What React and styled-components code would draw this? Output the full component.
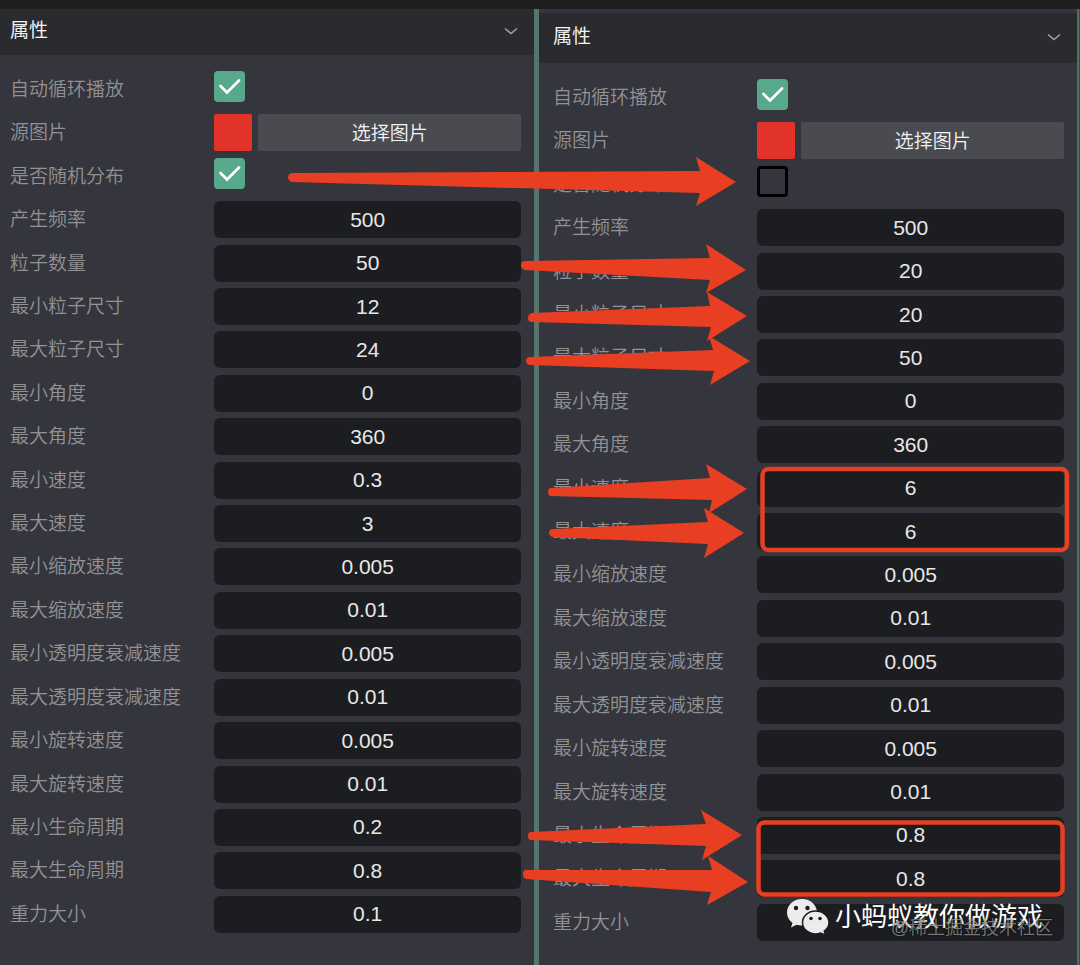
import React from "react";
import styled, { createGlobalStyle } from "styled-components";

const GlobalStyle = createGlobalStyle`
  * {
    box-sizing: border-box;
  }

  body {
    margin: 0;
    background: #35353d;
    font-family: "Liberation Sans", "Noto Sans CJK SC", sans-serif;
  }
`;

const Page = styled.div`
  position: relative;
  display: flex;
  flex-direction: column;
  min-height: 100vh;
  background: #35353d;
`;

const TopBar = styled.div`
  flex: none;
  height: 9px;
  background: #1f1f1f;
`;

const Columns = styled.div`
  flex: 1;
  display: grid;
  grid-template-columns: 534fr 5px 538fr 3px;
`;

const Divider = styled.div`
  border: solid #4f776c;
  border-width: 0 2px;
  background: #68706f;
`;

const EdgeLine = styled.div`
  border-left: 2px solid #4c7062;
  background: #3d4a47;
`;

const Panel = styled.section`
  display: flex;
  flex-direction: column;
  padding-top: ${props => (props.$offset ? "4px" : "0")};
  padding-bottom: ${props => (props.$offset ? "24px" : "32px")};
`;

const PanelHeader = styled.header`
  display: flex;
  align-items: center;
  justify-content: space-between;
  height: ${props => (props.$offset ? "50px" : "46px")};
  padding: 0 13px 0 ${props => (props.$offset ? "14px" : "10px")};
  background: #2a2b2f;
`;

const Title = styled.h2`
  margin: 0;
  color: #f2f2f2;
  font-size: 19px;
  font-weight: 400;
  line-height: 26px;
  padding-bottom: 2px;
`;

const Toggle = styled.button`
  display: flex;
  padding: 0 0 2px;
  border: 0;
  background: none;
  color: #a3a3a6;
  cursor: pointer;
`;

const Fields = styled.div`
  flex: 1;
  display: flex;
  flex-direction: column;
  justify-content: space-between;
  gap: 6px;
  padding: 16px 13px 0 ${props => (props.$offset ? "14px" : "10px")};
`;

const Row = styled.div`
  display: grid;
  grid-template-columns: 2fr 3fr;
  height: 37px;
`;

const Label = styled.label`
  color: #929295;
  font-size: 19px;
  font-weight: 350;
  line-height: 37px;
  white-space: nowrap;
`;

const NumberInput = styled.input`
  width: 100%;
  height: 37px;
  padding: 0;
  border: 0;
  border-radius: 6px;
  background: #1c1d20;
  color: #e8e8e8;
  font-family: inherit;
  font-size: 21px;
  text-align: center;
`;

const CheckWrap = styled.span`
  display: grid;
  width: 31px;
  height: 31px;

  > * {
    grid-area: 1 / 1;
  }

  svg {
    pointer-events: none;
  }
`;

const Checkbox = styled.input`
  appearance: none;
  width: 31px;
  height: 31px;
  margin: 0;
  border: 3px solid #000;
  border-radius: 4px;

  &:checked {
    border: 0;
    background: #58a88c;
  }

  &:not(:checked) + svg {
    display: none;
  }
`;

const ImagePicker = styled.div`
  display: flex;
  gap: 6px;
`;

const Swatch = styled.span`
  flex: none;
  width: 38px;
  height: 37px;
  border-radius: 2px;
  background: #e2332a;
`;

const PickButton = styled.button`
  flex: 1;
  height: 37px;
  padding: 0 0 3px;
  border: 0;
  border-radius: 2px;
  background: #4a4a51;
  color: #f2f2f2;
  font-family: inherit;
  font-size: 19px;
  font-weight: 350;
  cursor: pointer;
`;

const Annotations = styled.svg`
  position: absolute;
  inset: 0;
  width: 100%;
  height: 100%;
  pointer-events: none;
`;

const Account = styled.div`
  position: absolute;
  right: 37px;
  bottom: 28px;
  display: flex;
  align-items: center;
  gap: 6px;
  color: #fff;
  font-size: 26px;
  line-height: 40px;
  white-space: nowrap;
`;

const Community = styled.div`
  position: absolute;
  right: 27px;
  bottom: 24px;
  color: rgba(255, 255, 255, 0.45);
  font-size: 18px;
  font-weight: 350;
  line-height: 26px;
  text-shadow: 0 0 2px #000;
  white-space: nowrap;
`;

const before = [
  { label: "自动循环播放", type: "check", value: true },
  { label: "源图片", type: "image" },
  { label: "是否随机分布", type: "check", value: true },
  { label: "产生频率", value: "500" },
  { label: "粒子数量", value: "50" },
  { label: "最小粒子尺寸", value: "12" },
  { label: "最大粒子尺寸", value: "24" },
  { label: "最小角度", value: "0" },
  { label: "最大角度", value: "360" },
  { label: "最小速度", value: "0.3" },
  { label: "最大速度", value: "3" },
  { label: "最小缩放速度", value: "0.005" },
  { label: "最大缩放速度", value: "0.01" },
  { label: "最小透明度衰减速度", value: "0.005" },
  { label: "最大透明度衰减速度", value: "0.01" },
  { label: "最小旋转速度", value: "0.005" },
  { label: "最大旋转速度", value: "0.01" },
  { label: "最小生命周期", value: "0.2" },
  { label: "最大生命周期", value: "0.8" },
  { label: "重力大小", value: "0.1" }
];

const changes = {
  是否随机分布: false,
  粒子数量: "20",
  最小粒子尺寸: "20",
  最大粒子尺寸: "50",
  最小速度: "6",
  最大速度: "6",
  最小生命周期: "0.8",
  最大生命周期: "0.8",
  重力大小: ""
};

const after = before.map(field =>
  field.label in changes ? { ...field, value: changes[field.label] } : field
);

const arrows = [
  "M292 173 L700 171 L696 157 L736 182 L696 206 L700 193 L292 182 Q288 181 288 177 Q288 174 292 173Z",
  "M525 261 L710 258 L706 244 L746 270 L706 293 L710 280 L525 270 Q521 269 521 265 Q521 261 525 261Z",
  "M532 313 L710 306 L707 292 L747 316 L707 341 L711 327 L532 322 Q528 322 528 318 Q528 314 532 313Z",
  "M530 357 L713 350 L709 336 L750 361 L710 385 L714 371 L530 365 Q526 364 526 361 Q526 357 530 357Z",
  "M551 488 L710 478 L706 464 L747 489 L709 513 L712 500 L551 496 Q548 496 548 492 Q548 488 551 488Z",
  "M553 529 L708 522 L704 508 L744 533 L704 558 L708 544 L553 537 Q549 536 549 533 Q549 529 553 529Z",
  "M531 832 L706 824 L701 810 L742 835 L702 860 L706 846 L531 840 Q528 840 528 836 Q528 832 531 832Z",
  "M526 870 L712 870 L708 856 L748 882 L707 905 L711 892 L526 879 Q523 878 523 874 Q523 870 526 870Z"
];

const ParticlePanel = ({ id, fields, offset }) => (
  <Panel $offset={offset}>
    <PanelHeader $offset={offset}>
      <Title>属性</Title>
      <Toggle aria-label="属性">
        <svg width="20" height="20" viewBox="0 0 20 20" fill="none">
          <path d="M4 7.5 L10 12.5 L16 7.5" stroke="currentColor" strokeWidth="1.5" />
        </svg>
      </Toggle>
    </PanelHeader>
    <Fields $offset={offset}>
      {fields.map((field, i) => {
        const fieldId = `${id}-${i}`;
        return (
          <Row key={fieldId}>
            <Label htmlFor={fieldId}>{field.label}</Label>
            {field.type === "check" && (
              <CheckWrap>
                <Checkbox id={fieldId} type="checkbox" defaultChecked={field.value} />
                <svg width="31" height="31" viewBox="0 0 31 31" fill="none">
                  <path
                    d="M6.5 15 L13 21.5 L25 9.5"
                    stroke="#fff"
                    strokeWidth="2.7"
                    strokeLinecap="round"
                  />
                </svg>
              </CheckWrap>
            )}
            {field.type === "image" && (
              <ImagePicker>
                <Swatch />
                <PickButton id={fieldId}>选择图片</PickButton>
              </ImagePicker>
            )}
            {!field.type && (
              <NumberInput id={fieldId} type="text" defaultValue={field.value} />
            )}
          </Row>
        );
      })}
    </Fields>
  </Panel>
);

const WechatIcon = () => (
  <svg width="42" height="36" viewBox="0 0 42 36">
    <path
      d="M15 0 C6.500 0 0 6 0 13.500 C0 18 2.300 21.500 5.500 24 L4 28.500 L9.500 25.700 C11.500 26.300 13 26.500 15 26.500 C23.500 26.500 30 20.500 30 13.500 C30 6 23.500 0 15 0Z"
      fill="#ececec"
    />
    <path
      d="M28.500 12 C21.500 12 15.500 17 15.500 23.500 C15.500 30 21.500 35 28.500 35 C30.200 35 32 34.600 33.500 34 L38.500 36 L37.200 32 C40 30 42 27 42 23.500 C42 17 35.800 12 28.500 12Z"
      fill="#ececec"
      stroke="#1c1d20"
      strokeWidth="1.5"
    />
    <g fill="#1c1d20">
      <circle cx="9" cy="9" r="2.200" />
      <circle cx="20.500" cy="9" r="2.200" />
      <circle cx="24" cy="19.500" r="1.800" />
      <circle cx="33" cy="19.500" r="1.800" />
    </g>
  </svg>
);

const App = () => (
  <>
    <GlobalStyle />
    <Page>
      <TopBar />
      <Columns>
        <ParticlePanel id="before" fields={before} />
        <Divider />
        <ParticlePanel id="after" fields={after} offset />
        <EdgeLine />
      </Columns>
      <Annotations viewBox="0 0 1080 965">
        <g fill="#e83f22">
          {arrows.map(d => (
            <path key={d} d={d} />
          ))}
        </g>
        <g fill="none" stroke="#e83f22" strokeWidth="4.5">
          <rect x="762.5" y="469" width="304.5" height="81" rx="6" />
          <rect x="758.5" y="822.5" width="304" height="72" rx="6" />
        </g>
      </Annotations>
      <Account>
        <WechatIcon />
        小蚂蚁教你做游戏
      </Account>
      <Community>@稀土掘金技术社区</Community>
    </Page>
  </>
);

export default App;
